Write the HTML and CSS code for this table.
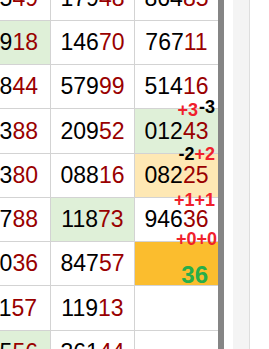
FILE: index.html
```html
<!DOCTYPE html>
<html>
<head>
<meta charset="utf-8">
<link rel="stylesheet" href="styles.css">
</head>
<body>
<div class="page">
  <div class="sheet">
    <div class="grid">
      <div class="cell first">335<span class="hi">49</span></div>
      <div class="cell">179<span class="hi">48</span></div>
      <div class="cell">864<span class="hi">85</span></div>

      <div class="cell first green">409<span class="hi">18</span></div>
      <div class="cell">146<span class="hi">70</span></div>
      <div class="cell">767<span class="hi">11</span></div>

      <div class="cell first">308<span class="hi">44</span></div>
      <div class="cell">579<span class="hi">99</span></div>
      <div class="cell">514<span class="hi">16</span></div>

      <div class="cell first">503<span class="hi">88</span></div>
      <div class="cell">209<span class="hi">52</span></div>
      <div class="cell green tagged">012<span class="hi">43</span>
        <div class="tag t3"><span class="up">+3</span><span class="dn raised">-3</span></div>
      </div>

      <div class="cell first">603<span class="hi">80</span></div>
      <div class="cell">088<span class="hi">16</span></div>
      <div class="cell orange tagged">082<span class="hi">25</span>
        <div class="tag t4"><span class="dn">-2</span><span class="up">+2</span></div>
      </div>

      <div class="cell first">147<span class="hi">88</span></div>
      <div class="cell green">118<span class="hi">73</span></div>
      <div class="cell tagged">946<span class="hi">36</span>
        <div class="tag t5"><span class="up">+1</span><span class="up">+1</span></div>
      </div>

      <div class="cell first">300<span class="hi">36</span></div>
      <div class="cell">847<span class="hi">57</span></div>
      <div class="cell amber tagged"><span class="result">36</span>
        <div class="tag t6"><span class="up">+0</span><span class="up">+0</span></div>
      </div>

      <div class="cell first">211<span class="hi">57</span></div>
      <div class="cell">119<span class="hi">13</span></div>
      <div class="cell"></div>

      <div class="cell first green">725<span class="hi">56</span></div>
      <div class="cell">361<span class="hi">44</span></div>
      <div class="cell"></div>
    </div>
  </div>
  <div class="bar"></div>
  <div class="gapcol"></div>
  <div class="stripe"></div>
  <div class="rest"></div>
</div>
</body>
</html>
```

FILE: styles.css
```css
html, body {
  margin: 0;
  padding: 0;
  background: #ffffff;
  overflow: hidden;
}

.page {
  display: flex;
  width: 269px;
  height: 349px;
  overflow: hidden;
}

.sheet {
  flex: none;
  width: 218px;
  height: 349px;
  overflow: hidden;
}

.grid {
  margin: -24px 0 0 -34px;
  display: grid;
  grid-template-columns: 83px 83px 83px;
  grid-template-rows: 43px 43px 43px 44px 43px 43px 43px 44px 43px;
  gap: 1px;
  padding: 1px 0 0 1px;
  width: 251px;
  background: #d3d3d3;
  font-family: "Liberation Sans", Arial, sans-serif;
  font-size: 23px;
  color: #000000;
}

.cell {
  background: #ffffff;
  display: flex;
  align-items: center;
  justify-content: center;
  white-space: nowrap;
}

.cell.first {
  padding-right: 5px;
}

.cell .hi {
  color: #990000;
}

.green {
  background: #dff0d8;
}

.orange {
  background: #fee8b4;
}

.amber {
  background: #fbbd2e;
  justify-content: flex-end;
  align-items: flex-end;
  padding-right: 10px;
}

.result {
  font-weight: bold;
  font-size: 24px;
  line-height: 20px;
  color: #27ae4a;
}

.tagged {
  position: relative;
}

.tag {
  position: absolute;
  right: 3px;
  display: flex;
  align-items: flex-start;
  font-size: 18px;
  font-weight: bold;
  line-height: 18px;
}

.tag .up {
  color: #f0202c;
}

.tag .dn {
  color: #000000;
}

.tag .raised {
  position: relative;
  top: -3px;
  margin-left: 1px;
}

.t3 { top: -8px; }
.t4 { top: -9px; }
.t5 { top: -7px; }
.t6 { top: -12px; right: 1px; }

.bar {
  flex: none;
  width: 6px;
  background: #858585;
}

.gapcol {
  flex: none;
  width: 9px;
}

.stripe {
  flex: none;
  width: 16px;
  background: #f4f4f4;
  border-right: 1px solid #dedede;
}

.rest {
  flex: 1;
}
```
